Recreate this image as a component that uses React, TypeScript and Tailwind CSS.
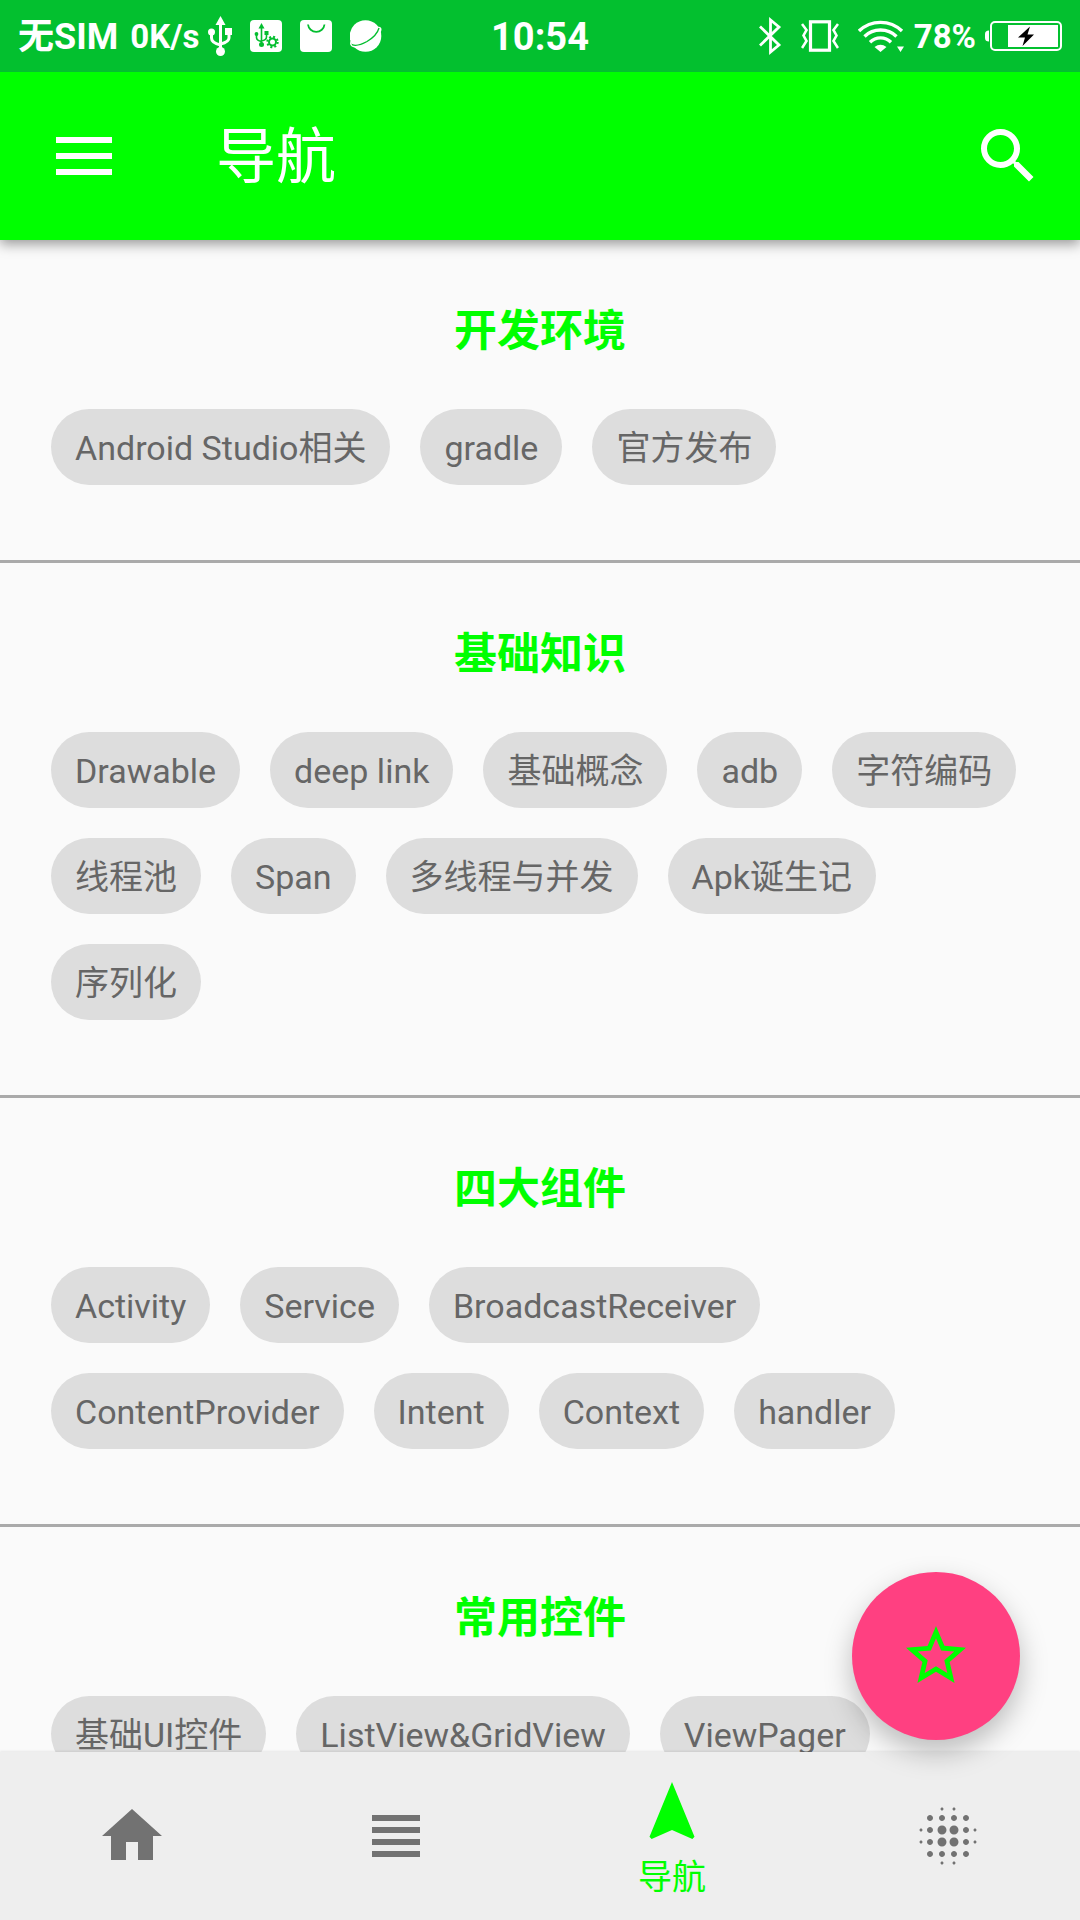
import React from "react";
import {
  MdBlurOn,
  MdHome,
  MdNavigation,
  MdSearch,
  MdStarBorder,
  MdViewHeadline,
} from "react-icons/md";

const sections = [
  { title: "开发环境", tags: ["Android Studio相关", "gradle", "官方发布"] },
  {
    title: "基础知识",
    tags: [
      "Drawable",
      "deep link",
      "基础概念",
      "adb",
      "字符编码",
      "线程池",
      "Span",
      "多线程与并发",
      "Apk诞生记",
      "序列化",
    ],
  },
  {
    title: "四大组件",
    tags: [
      "Activity",
      "Service",
      "BroadcastReceiver",
      "ContentProvider",
      "Intent",
      "Context",
      "handler",
    ],
  },
  { title: "常用控件", tags: ["基础UI控件", "ListView&GridView", "ViewPager"] },
];

function UsbIcon() {
  return (
    <svg className="h-10 w-6" viewBox="0 0 24 40" fill="none" stroke="#fff" strokeWidth="3">
      <path d="M12.5 8v24M3.5 16v6q0 5 9 7M21 16v6q0 4-8.500 6" />
      <path d="M12.500 0l5 9h-10z" fill="#fff" stroke="none" />
      <circle cx="3.500" cy="16" r="3.500" fill="#fff" stroke="none" />
      <rect x="17" y="12" width="7" height="7" fill="#fff" stroke="none" />
      <circle cx="12.500" cy="35.500" r="4.500" fill="#fff" stroke="none" />
    </svg>
  );
}

function UsbDebugIcon() {
  return (
    <svg className="size-8" viewBox="0 0 32 32" fill="none">
      <rect width="32" height="32" rx="4" fill="#fff" />
      <g stroke="#03be2f" strokeWidth="1.600">
        <path d="M11.500 6v17M6.500 14v3.500q0 3 5 4M16.500 13v4q0 3-5 4" />
      </g>
      <g fill="#03be2f">
        <path d="M11.500 3l3 5.500h-6z" />
        <circle cx="6.500" cy="14" r="1.900" />
        <rect x="14.500" y="11" width="4" height="4" />
        <circle cx="11.500" cy="24.500" r="2.500" />
      </g>
      <circle cx="22.500" cy="22" r="3.500" stroke="#03be2f" strokeWidth="2" />
      <circle cx="22.500" cy="22" r="5.200" stroke="#03be2f" strokeWidth="2" strokeDasharray="2 2.080" />
    </svg>
  );
}

function BagIcon() {
  return (
    <svg className="size-8" viewBox="0 0 32 32" fill="none">
      <rect width="32" height="32" rx="4" fill="#fff" />
      <path d="M8 4.500a8.300 8.300 0 0 0 16.500 0" stroke="#03be2f" strokeWidth="1.800" />
    </svg>
  );
}

function PlanetIcon() {
  return (
    <svg className="size-8" viewBox="0 0 32 32" fill="none">
      <circle cx="15.500" cy="16" r="15.800" fill="#fff" />
      <path d="M1.500 20.500C-1 27 4 28 13 24C24 19.500 32 11.500 30.500 8.500Q29.500 7 26.500 8" stroke="#fff" strokeWidth="1.600" />
      <path d="M2 24.500Q7 27 17 21.500Q27 15.500 29 8" stroke="#03be2f" strokeWidth="1.300" />
    </svg>
  );
}

function BluetoothIcon() {
  return (
    <svg className="h-10 w-6" viewBox="0 0 24 40" fill="none" stroke="#fff" strokeWidth="2.800">
      <path d="M2 10.500l19 18.500-8.500 7V4L21 11 2 29.500" />
    </svg>
  );
}

function VibrateIcon() {
  return (
    <svg className="h-8 w-[38px]" viewBox="0 0 38 32" fill="none" stroke="#fff">
      <rect x="9.500" y="1.800" width="19" height="28.400" strokeWidth="3.200" />
      <path d="M1 4l4.500 6-3 5.500 3 5.500L1 28M37 4l-4.500 6 3 5.500-3 5.500L37 28" strokeWidth="2.600" />
    </svg>
  );
}

function WifiIcon() {
  return (
    <svg className="h-8 w-[46px]" viewBox="0 0 46 32" fill="none" stroke="#fff" strokeWidth="3.400">
      <path d="M1 11a31 31 0 0 1 43 0M6.500 16.500a23 23 0 0 1 32 0M12 22.200a15 15 0 0 1 21 0" />
      <path d="M22.500 32l-6-5q6-4.500 12 0zM42.500 32l-3.500-5.500h7z" fill="#fff" stroke="none" />
    </svg>
  );
}

function BatteryIcon() {
  return (
    <svg className="h-[30px] w-[77px]" viewBox="0 0 77 30" fill="none">
      <path d="M4 9.500v11Q0 20.500 0 17v-4Q0 9.500 4 9.500z" fill="#fff" />
      <rect x="6" y="1" width="70" height="28" rx="4" stroke="#fff" strokeWidth="2" />
      <rect x="23" y="4" width="50" height="22" fill="#fff" />
      <path d="M45 5.500L33 16.500h7L37.500 25 49 13.500h-6.500z" fill="#000" />
    </svg>
  );
}

function StatusBar() {
  return (
    <div className="relative z-20 flex h-[72px] shrink-0 items-center bg-[#03c02f] pr-[18px] pl-[18px] font-bold text-white">
      <div className="flex flex-1 items-center">
        <span className="pt-[2px] text-[36px] leading-[70px]">无SIM</span>
        <span className="ml-3 pt-[2px] text-[33px] leading-[70px]">0K/s</span>
        <span className="ml-[9px] flex items-center gap-[18px]">
          <UsbIcon />
          <UsbDebugIcon />
          <BagIcon />
          <PlanetIcon />
        </span>
      </div>
      <span className="pt-[2px] text-[38px] leading-[70px]">10:54</span>
      <div className="flex flex-1 items-center justify-end">
        <span className="flex items-center gap-[19px]">
          <BluetoothIcon />
          <VibrateIcon />
          <WifiIcon />
        </span>
        <span className="mr-[9px] ml-[10px] pt-[2px] text-[33px] leading-[70px]">78%</span>
        <BatteryIcon />
      </div>
    </div>
  );
}

function Toolbar() {
  return (
    <header className="relative z-10 flex h-[168px] shrink-0 items-center bg-[#00ff00] px-9 text-white shadow-[0_4px_12px_rgba(0,0,0,0.4)]">
      <button type="button" aria-label="菜单" className="flex h-24 w-24 items-center justify-center">
        <svg className="h-[38px] w-14" viewBox="0 0 56 38" fill="#fff">
          <path d="M0 0h56v6H0zM0 16h56v6H0zM0 32h56v6H0z" />
        </svg>
      </button>
      <h1 className="ml-[84px] flex-1 pt-1 text-[60px] leading-[72px]">导航</h1>
      <button type="button" aria-label="搜索">
        <MdSearch className="size-[72px]" />
      </button>
    </header>
  );
}

function Section({ title, tags }: { title: string; tags: string[] }) {
  return (
    <section className="border-b-[3px] border-[#aaaaaa] px-[51px] pt-[60px] pb-[75px]">
      <h2 className="text-center text-[43px] leading-[63px] font-bold text-[#00ff00]">{title}</h2>
      <div className="mt-[46px] flex flex-wrap gap-[30px]">
        {tags.map((tag) => (
          <button
            key={tag}
            type="button"
            className="h-[76px] rounded-full bg-[#dddddd] px-6 pt-[2px] text-[34px] leading-[74px] whitespace-nowrap text-[#666666]"
          >
            {tag}
          </button>
        ))}
      </div>
    </section>
  );
}

function BottomBar() {
  return (
    <footer className="relative shrink-0 bg-[#eeeeee] shadow-[0_-1px_2px_rgba(0,0,0,0.08)]">
      <button
        type="button"
        aria-label="收藏"
        className="absolute right-[60px] bottom-[180px] flex size-[168px] items-center justify-center rounded-full bg-[#ff4081] shadow-[0_12px_28px_rgba(0,0,0,0.25)]"
      >
        <MdStarBorder className="size-[72px] text-[#00ff00]" />
      </button>
      <nav className="flex h-[168px] text-[#727272]">
        <button type="button" aria-label="首页" className="flex flex-11 items-center justify-center">
          <MdHome className="size-[72px]" />
        </button>
        <button type="button" aria-label="列表" className="flex flex-11 items-center justify-center">
          <MdViewHeadline className="size-[72px]" />
        </button>
        <button
          type="button"
          aria-current="page"
          className="flex flex-12 flex-col items-center pt-6 text-[#00ff00]"
        >
          <MdNavigation className="size-[72px]" />
          <span className="mt-1 text-[34px] leading-[50px]">导航</span>
        </button>
        <button type="button" aria-label="更多" className="flex flex-11 items-center justify-center">
          <MdBlurOn className="size-[72px]" />
        </button>
      </nav>
    </footer>
  );
}

export default function App() {
  return (
    <div className="flex h-screen flex-col bg-[#fafafa] font-['Roboto','Noto_Sans_CJK_SC',sans-serif]">
      <StatusBar />
      <Toolbar />
      <main className="min-h-0 flex-1 overflow-y-auto [scrollbar-width:none]">
        {sections.map((s) => (
          <Section key={s.title} title={s.title} tags={s.tags} />
        ))}
      </main>
      <BottomBar />
    </div>
  );
}
